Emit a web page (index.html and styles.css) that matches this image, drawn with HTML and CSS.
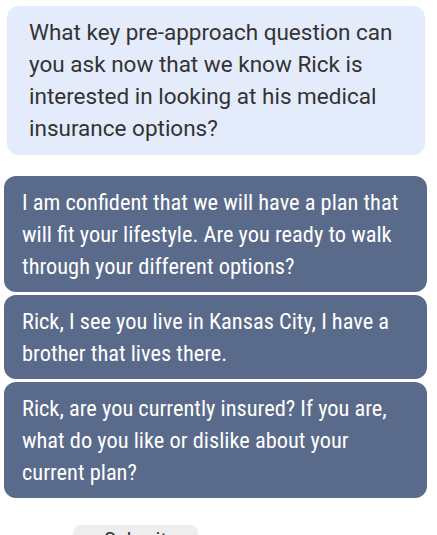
FILE: index.html
```html
<!DOCTYPE html>
<html lang="en">
<head>
    <meta charset="UTF-8">
    <meta name="viewport" content="width=device-width, initial-scale=1.0">
    <title>Pre-approach quiz</title>
    <link rel="stylesheet" href="styles.css">
</head>
<body>
    <div class="quiz">
        <div class="question">
            What key pre-approach question can you ask now that we know Rick is interested in looking at his medical insurance options?
        </div>

        <div class="options">
            <div class="option">I am confident that we will have a plan that will fit your lifestyle. Are you ready to walk through your different options?</div>
            <div class="option">Rick, I see you live in Kansas City, I have a brother that lives there.</div>
            <div class="option">Rick, are you currently insured? If you are, what do you like or dislike about your current plan?</div>
        </div>

        <div class="actions">
            <button class="submit-btn">Submit</button>
        </div>
    </div>
</body>
</html>
```

FILE: styles.css
```css
body {
    margin: 0;
    padding: 6px 10px 0 4px;
    background-color: #ffffff;
    font-family: Roboto, "Noto Sans", sans-serif;
}
.quiz {
    width: 423px;
}
.question {
    margin: 0 2px 0 3px;
    padding: 10px 20px 11px 22px;
    background-color: #e4ecfc;
    border-radius: 12px;
    color: #333333;
    font-size: 22.5px;
    line-height: 32px;
}
.options {
    margin-top: 21px;
    display: flex;
    flex-direction: column;
    gap: 3px;
}
.option {
    padding: 10px 18px 10px 18px;
    background-color: #5a6a8a;
    border-radius: 12px;
    color: #ffffff;
    font-family: "Roboto Condensed", Roboto, sans-serif;
    font-stretch: condensed;
    font-size: 22.4px;
    line-height: 32px;
}
.actions {
    margin-top: 27px;
    padding-left: 69px;
}
.submit-btn {
    width: 125px;
    padding: 3px 0 10px;
    border: none;
    border-radius: 8px;
    background-color: #eeeeee;
    color: #333333;
    font-family: Roboto, sans-serif;
    font-size: 20px;
}
```
